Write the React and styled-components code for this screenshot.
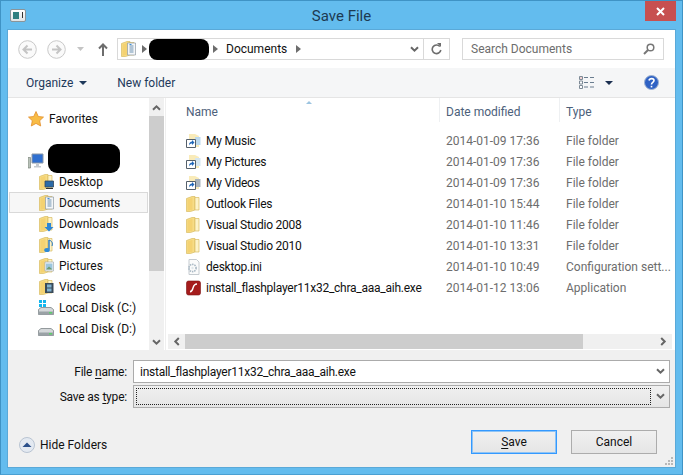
import styled, { createGlobalStyle } from "styled-components";

const GlobalStyle = createGlobalStyle`
    html, body {
        margin : 0;
        width : 683px;
        height : 475px;
        overflow : hidden;
        font-family : Roboto, "Liberation Sans", sans-serif;
        font-size : 12px;
        color : #111111;
    }
    * { box-sizing : border-box; }
    svg { display : block; flex : none; }
`

const Win = styled.div`
    width : 683px;
    height : 475px;
    display : flex;
    flex-direction : column;
    padding : 0 7px 7px 7px;
    background-color : #63bcee;
    border : 1px solid #3f93c5;
    border-bottom-color : #4aa0d2;
`

const TitleBar = styled.div`
    height : 29px;
    display : grid;
    grid-template-columns : 1fr auto 1fr;
    align-items : start;
`

const TitleIcon = styled.div`
    width : 16px;
    height : 13px;
    margin-top : 8px;
    margin-left : 2px;
    background : linear-gradient(#ffffff, #dfe3e6);
    border : 1px solid #8a9499;
    border-radius : 2px;
    padding : 2px;
    display : flex;
    &::before { content : ""; width : 6px; height : 7px; background : #2f7f80; }
    &::after { content : ""; width : 1px; height : 6px; background : #333; margin-left : 3px; }
`

const Title = styled.div`
    font-size : 15px;
    line-height : 31px;
    color : #1d3a52;
`

const CloseBtn = styled.div`
    justify-self : end;
    width : 31px;
    height : 20px;
    margin-right : -1px;
    background-color : #c75050;
    display : flex;
    justify-content : center;
    align-items : center;
`

const Client = styled.div`
    flex : 1;
    min-height : 0;
    display : flex;
    flex-direction : column;
    background-color : #f0f0f0;
    box-shadow : 0 0 0 1px #5aa9d8;
`

const NavBar = styled.div`
    height : 38px;
    flex : none;
    background-color : white;
    display : flex;
    align-items : center;
    padding-left : 10px;
`

const Hidden = styled.div`
    background-color : black;
    border-radius : ${(p) => p.$radius || 8}px;
    width : ${(p) => p.$w}px;
    height : ${(p) => p.$h}px;
    margin-left : ${(p) => p.$left || 0}px;
    margin-top : ${(p) => p.$top || 0}px;
    flex : none;
`

const Spacer = styled.span`
    width : ${(p) => p.$w}px;
    flex : none;
`

const Slot = styled.div`
    margin-left : ${(p) => p.$left}px;
    flex : none;
`

const AddressBox = styled.div`
    width : 333px;
    height : 22px;
    margin-left : 9px;
    display : flex;
    align-items : center;
    border : 1px solid #d9d9d9;
    padding-left : 3px;
`

const AddressText = styled.span`
    color : #111111;
    width : 61px;
    margin-left : 8px;
    white-space : nowrap;
`

const AddressEnd = styled.div`
    margin-left : auto;
    display : flex;
    align-items : center;
    height : 100%;
`

const RefreshCell = styled.div`
    width : 26px;
    height : 100%;
    margin-left : 4px;
    border-left : 1px solid #d9d9d9;
    display : flex;
    justify-content : center;
    align-items : center;
`

const SearchBox = styled.div`
    width : 202px;
    height : 22px;
    margin-left : 12px;
    border : 1px solid #d9d9d9;
    padding : 0 8px;
    display : flex;
    align-items : center;
    justify-content : space-between;
    color : #6d6d6d;
`

const ToolBar = styled.div`
    height : 30px;
    flex : none;
    background-color : #f5f6f7;
    border-bottom : 1px solid #e5e5e5;
    display : flex;
    align-items : center;
    color : #1e395b;
    padding-left : 18px;
`

const ToolLabel = styled.span`
    margin-left : ${(p) => p.$left || 0}px;
    margin-right : ${(p) => p.$gap || 0}px;
    white-space : nowrap;
`

const ToolRight = styled.div`
    margin-left : auto;
    display : flex;
    align-items : center;
    margin-right : 16px;
`

const Main = styled.div`
    height : 252px;
    flex : none;
    display : flex;
    background-color : white;
`

const Side = styled.div`
    width : 141px;
    flex : none;
    padding-top : 10px;
    overflow : hidden;
`

const SideRow = styled.div`
    height : 21px;
    margin-left : ${(p) => (p.$top ? 0 : 1)}px;
    width : ${(p) => (p.$top ? 141 : 139)}px;
    display : flex;
    align-items : center;
    gap : 5px;
    padding-left : ${(p) => (p.$top ? 19 : 29)}px;
    white-space : nowrap;
    color : #111111;
    border : 1px solid ${(p) => (p.$selected ? "#d9d9d9" : "transparent")};
    background-color : ${(p) => (p.$selected ? "#f7f7f7" : "transparent")};
`

const SideGap = styled.div`
    height : 21px;
`

const VScroll = styled.div`
    width : 15px;
    flex : none;
    display : flex;
    flex-direction : column;
    background-color : #f0f0f0;
`

const VArrow = styled.div`
    height : ${(p) => p.$h}px;
    flex : none;
    display : flex;
    justify-content : center;
    align-items : center;
`

const VThumb = styled.div`
    height : 155px;
    flex : none;
    background-color : #cdcdcd;
`

const VFill = styled.div`
    flex : 1;
`

const Splitter = styled.div`
    width : 4px;
    flex : none;
    background : linear-gradient(90deg, white 0 1px, #efefef 1px 2px, white 2px);
`

const Files = styled.div`
    flex : 1;
    min-width : 0;
    display : flex;
    flex-direction : column;
    position : relative;
`

const SortMark = styled.div`
    position : absolute;
    left : 138px;
    top : 3px;
    width : 0;
    height : 0;
    border : 3px solid transparent;
    border-top : 0;
    border-bottom : 3px solid #9cc4e0;
`

const Columns = styled.div`
    display : grid;
    grid-template-columns : 271px 120px 1fr;
    align-items : center;
    height : ${(p) => p.$h}px;
    flex : none;
`

const HeadCell = styled.div`
    height : 100%;
    display : flex;
    align-items : center;
    color : #4c607a;
    padding-left : ${(p) => p.$left}px;
    padding-top : 4px;
    border-left : ${(p) => (p.$line ? "1px solid #eef0f2" : "none")};
`

const FileList = styled.div`
    padding-top : 8px;
    flex : 1;
`

const NameCell = styled.div`
    display : flex;
    align-items : center;
    gap : 5px;
    padding-left : 18px;
    color : #111111;
    white-space : nowrap;
    letter-spacing : -0.25px;
`

const InfoCell = styled.div`
    padding-left : 7px;
    color : #6d6d6d;
    white-space : nowrap;
`

const HScroll = styled.div`
    height : 15px;
    margin-bottom : 1px;
    margin-right : 3px;
    flex : none;
    display : flex;
    align-items : stretch;
    background-color : #f0f0f0;
`

const HArrow = styled.div`
    width : 17px;
    flex : none;
    display : flex;
    align-items : center;
    justify-content : center;
`

const HThumb = styled.div`
    width : 398px;
    flex : none;
    background-color : #cdcdcd;
`

const HFill = styled.div`
    flex : 1;
`

const Bottom = styled.div`
    flex : 1;
    display : flex;
    flex-direction : column;
    padding-top : 10px;
    position : relative;
`

const FieldRow = styled.div`
    display : flex;
    align-items : center;
    height : 23px;
    margin-bottom : 2px;
`

const FieldLabel = styled.div`
    width : 119px;
    text-align : right;
    color : #111111;
    letter-spacing : -0.2px;
    u { text-underline-offset : 2px; }
`

const FileInput = styled.div`
    width : 537px;
    height : 100%;
    margin-left : 6px;
    border : 1px solid #ababab;
    background-color : ${(p) => (p.$select ? "transparent" : "white")};
    background-image : ${(p) => (p.$select ? "linear-gradient(#f0f0f0, #e5e5e5)" : "none")};
    display : flex;
    align-items : center;
    justify-content : space-between;
    padding : ${(p) => (p.$select ? "2px 4px 2px 2px" : "0 4px 0 6px")};
    white-space : nowrap;
    letter-spacing : -0.25px;
`

const FocusBox = styled.div`
    flex : none;
    width : 515px;
    height : 100%;
    border : 1px dotted #222;
`

const Footer = styled.div`
    margin-top : 20px;
    display : flex;
    align-items : flex-start;
    justify-content : space-between;
    padding : 0 18px 0 11px;
`

const HideBtn = styled.div`
    display : flex;
    align-items : center;
    gap : 5px;
    margin-top : 7px;
    color : #111111;
`

const ButtonRow = styled.div`
    display : flex;
    gap : 14px;
`

const DlgButton = styled.div`
    width : 86px;
    height : 24px;
    display : flex;
    justify-content : center;
    align-items : center;
    border : 1px solid ${(p) => (p.$primary ? "#3399ff" : "#acacac")};
    box-shadow : ${(p) => (p.$primary ? "inset 0 0 0 1px #8fc4f5" : "none")};
    background-image : linear-gradient(#f0f0f0, #e5e5e5);
    color : #111111;
    u { text-underline-offset : 2px; }
`

const Grip = styled.div`
    position : absolute;
    right : 2px;
    bottom : 2px;
    display : grid;
    grid-template-columns : repeat(3, 2px);
    grid-auto-rows : 2px;
    gap : 1px;
`

const GripDot = styled.span`
    background-color : ${(p) => (p.$off ? "transparent" : "#b8b8b8")};
`

const TurnSvg = styled.svg`
    transform : rotate(${(p) => p.$rot}deg);
`

const MirrorSvg = styled.svg`
    transform : ${(p) => (p.$flip ? "scaleX(-1)" : "none")};
`

const DiskSvg = styled.svg`
    margin-left : -1px;
`

const Arrow = ({ color = "#6d6d6d" }) => (
    <svg width="5" height="8" viewBox="0 0 5 8"><path d="M0 0l5 4-5 4z" fill={color} /></svg>
)

const Caret = ({ color = "#1e395b" }) => (
    <svg width="8" height="4" viewBox="0 0 8 4"><path d="M0 0h8L4 4z" fill={color} /></svg>
)

const chevronTurn = { down: 0, up: 180, left: 90, right: -90 };

const Chevron = ({ dir = "down", color = "#666" }) => (
    <TurnSvg $rot={chevronTurn[dir]} width="9" height="7" viewBox="0 0 9 7">
        <path d="M1 1.2l3.5 3.5L8 1.2" fill="none" stroke={color} strokeWidth="2" />
    </TurnSvg>
)

const NavCircle = ({ flip }) => (
    <MirrorSvg $flip={flip} width="19" height="19" viewBox="0 0 19 19">
        <circle cx="9.5" cy="9.5" r="8.8" fill="#fafafa" stroke="#c9c9c9" />
        <path d="M14 9.5H6M9.5 5.5l-4 4 4 4" fill="none" stroke="#c4c4c4" strokeWidth="2" />
    </MirrorSvg>
)

const FolderBase = () => (
    <>
        <path d="M.5 2.5L6 .5h3V14l-4.500 1.500H.5z" fill="#f7dc86" stroke="#d8bb62" strokeWidth=".7" />
        <path d="M9 1.500h4V14H9z" fill="#fdf3c8" stroke="#d8bb62" strokeWidth=".7" />
        <path d="M1.500 3.500L6.500 1.800v12L1.500 14.800z" fill="#f4d272" />
    </>
)

const Folder = ({ children }) => (
    <svg width="15" height="16" viewBox="0 0 15 16">
        <FolderBase />
        {children}
    </svg>
)

const DocLines = () => (
    <g>
        <path d="M6.500 2h8v12h-8z" fill="#f4f6f8" stroke="#8e9aa4" strokeWidth=".7" />
        <path d="M8.500 5h4M8.500 7h4M8.500 9h4M8.500 11h4" stroke="#6f93b2" />
        <path d="M8.500 3h2v1h-2z" fill="#3d8fd8" />
    </g>
)

const overlays = {
    desktop: <><path d="M6 7h8.500v6H6z" fill="#2a6aa8" stroke="#33475a" strokeWidth=".8" /><path d="M7 14.500h7" stroke="#333" /></>,
    documents: <DocLines />,
    downloads: <path d="M8 7h4v4h2.500L10 15.500 5.500 11H8z" fill="#2d86d6" />,
    music: <><path d="M10 3v9.500" stroke="#2276c4" strokeWidth="1.400" /><ellipse cx="8" cy="13" rx="2.800" ry="2" fill="#2f8ad6" /><path d="M10 3c3 1 4 3 3 6" fill="none" stroke="#2276c4" /></>,
    pictures: <><path d="M6 4h8.500v9H6z" fill="#f8f8f8" stroke="#a2adb5" strokeWidth=".7" /><path d="M7 5.500h6.500v6H7z" fill="#9cc6de" /><path d="M7 11.500l3-3 3.500 3z" fill="#6f9a70" /></>,
    videos: <><path d="M6 4h8.500v10H6z" fill="#3a4a58" /><path d="M8 5.500h4.500v3H8zM8 9.500h4.500v3H8z" fill="#7fb2d0" /></>,
}

const Disk = ({ system }) => (
    <DiskSvg width="16" height="16" viewBox="0 0 16 16">
        {system && <path d="M1 0h3v3H1zM5 0h3v3H5zM1 4h3v3H1zM5 4h3v3H5z" fill="#12b6ee" />}
        <path d="M.5 9.500L3 7.500h10l2.500 2v5H.5z" fill="#d4d8da" stroke="#7e8589" strokeWidth=".8" />
        <path d="M.5 11.500h15v3H.5z" fill="#9aa2a6" />
        <path d="M11 12h3v1.500h-3z" fill="#5bd16a" />
    </DiskSvg>
)

const Computer = () => (
    <svg width="16" height="16" viewBox="0 0 16 16">
        <path d="M0 4.500h2.500V15H0z" fill="#b9c2b9" stroke="#6d766d" strokeWidth=".6" />
        <path d="M4 1h11v9H4z" fill="#2f6fd0" stroke="#8a97a6" />
        <path d="M8 11h3v2h2v1.500H6V13h2z" fill="#c4c9cf" />
    </svg>
)

const Star = () => (
    <svg width="16" height="16" viewBox="0 0 16 16">
        <path d="M8 .5l2.300 5 5.200.600-3.800 3.600 1 5.300L8 12.400 3.300 15l1-5.300L.5 6.100l5.200-.600z" fill="#f8bc45" stroke="#e28e2c" strokeWidth=".8" />
    </svg>
)

const Shortcut = ({ color }) => (
    <svg width="15" height="16" viewBox="0 0 15 16">
        <path d="M3 1h6l4 2v11H3z" fill="#f7e6a8" opacity=".8" />
        <path d="M9 4h5.500v8H9z" fill={color} />
        <path d="M.5 6.500h9v8h-9z" fill="white" stroke="#55606a" />
        <path d="M3 12.500c0-3 1.500-4 3-4V7l2.500 2.500L6 12v-1.500c-1.200 0-2.300.6-3 2z" fill="#1f66b8" />
    </svg>
)

const IniFile = () => (
    <svg width="15" height="16" viewBox="0 0 15 16">
        <path d="M3 .5h7.500L13 3v12.500H3z" fill="#fbfbfb" stroke="#c5cbd0" />
        <circle cx="6.500" cy="9" r="3.600" fill="none" stroke="#a9b8c4" strokeWidth="1.600" strokeDasharray="1.500 .8" />
        <circle cx="6.500" cy="9" r="1.200" fill="#dfe6eb" />
    </svg>
)

const FlashFile = () => (
    <svg width="15" height="16" viewBox="0 0 15 16">
        <rect x=".5" y="1" width="14" height="14" rx="2" fill="#a51c1c" stroke="#7c1111" strokeWidth=".6" />
        <path d="M11 4c-3 0-3.500 2-4 4s-1.200 3.500-3 3.800" fill="none" stroke="white" strokeWidth="1.400" />
    </svg>
)

const sideItems = [
    { label: "Desktop", kind: "desktop" },
    { label: "Documents", kind: "documents", selected: true },
    { label: "Downloads", kind: "downloads" },
    { label: "Music", kind: "music" },
    { label: "Pictures", kind: "pictures" },
    { label: "Videos", kind: "videos" },
]

const fileItems = [
    { name: "My Music", date: "2014-01-09 17:36", type: "File folder", icon: <Shortcut color="#bcd9ee" /> },
    { name: "My Pictures", date: "2014-01-09 17:36", type: "File folder", icon: <Shortcut color="#d5e6f0" /> },
    { name: "My Videos", date: "2014-01-09 17:36", type: "File folder", icon: <Shortcut color="#a9b4bd" /> },
    { name: "Outlook Files", date: "2014-01-10 15:44", type: "File folder", icon: <Folder /> },
    { name: "Visual Studio 2008", date: "2014-01-10 11:46", type: "File folder", icon: <Folder /> },
    { name: "Visual Studio 2010", date: "2014-01-10 13:31", type: "File folder", icon: <Folder /> },
    { name: "desktop.ini", date: "2014-01-10 10:49", type: "Configuration sett...", icon: <IniFile /> },
    { name: "install_flashplayer11x32_chra_aaa_aih.exe", date: "2014-01-12 13:06", type: "Application", icon: <FlashFile /> },
]

const App = () => {
    return (
        <>
        <GlobalStyle />
        <Win>
            <TitleBar>
                <TitleIcon />
                <Title>Save File</Title>
                <CloseBtn>
                    <svg width="9" height="9" viewBox="0 0 9 9"><path d="M1 1l7 7M8 1L1 8" stroke="white" strokeWidth="2" /></svg>
                </CloseBtn>
            </TitleBar>
            <Client>
                <NavBar>
                    <NavCircle />
                    <Spacer $w={10} />
                    <NavCircle flip />
                    <Slot $left={11}>
                        <svg width="7" height="4" viewBox="0 0 7 4"><path d="M0 0h7L3.500 4z" fill="#c4c4c4" /></svg>
                    </Slot>
                    <Slot $left={14}>
                        <svg width="10" height="13" viewBox="0 0 10 13"><path d="M5 13V2M1 5.500L5 1.500l4 4" fill="none" stroke="#6d6d6d" strokeWidth="2" /></svg>
                    </Slot>
                    <AddressBox>
                        <Folder>{overlays.documents}</Folder>
                        <Spacer $w={6} />
                        <Arrow />
                        <Spacer $w={2} />
                        <Hidden $w={60} $h={21} />
                        <Spacer $w={4} />
                        <Arrow />
                        <AddressText>Documents</AddressText>
                        <Spacer $w={9} />
                        <Arrow />
                        <AddressEnd>
                            <Chevron />
                            <RefreshCell>
                                <svg width="11" height="12" viewBox="0 0 11 12"><path d="M8.800 3.500A4.300 4.300 0 1 0 9.800 7" fill="none" stroke="#6d6d6d" strokeWidth="1.600" /><path d="M6 0l4 0v4z" fill="#6d6d6d" /></svg>
                            </RefreshCell>
                        </AddressEnd>
                    </AddressBox>
                    <SearchBox>
                        Search Documents
                        <svg width="12" height="12" viewBox="0 0 12 12"><circle cx="7.500" cy="4.500" r="3.300" fill="none" stroke="#777" strokeWidth="1.500" /><path d="M5 7l-4 4" stroke="#777" strokeWidth="2" /></svg>
                    </SearchBox>
                </NavBar>
                <ToolBar>
                    <ToolLabel $gap={6}>Organize</ToolLabel>
                    <Caret />
                    <ToolLabel $left={30}>New folder</ToolLabel>
                    <ToolRight>
                        <svg width="15" height="13" viewBox="0 0 15 13">
                            <path d="M.5.500h3v3h-3zM.5 5h3v3h-3zM.5 9.500h3v3h-3z" fill="white" stroke="#7d8a96" />
                            <path d="M5 1.500h4M11 1.500h4M5 6.500h4M11 6.500h4M5 11h4M11 11h4" stroke="#6a7d8f" />
                            <path d="M1.500 1.500h1v1h-1z" fill="#c04040" />
                        </svg>
                        <Spacer $w={11} />
                        <Caret color="#1b2f50" />
                        <Slot $left={31}>
                            <svg width="15" height="15" viewBox="0 0 15 15">
                                <circle cx="7.500" cy="7.500" r="7" fill="#2f62c4" stroke="#9eb2d0" />
                                <path d="M5 5.500c.5-2.500 5-2.500 5 0 0 2-2.500 1.800-2.500 4" fill="none" stroke="white" strokeWidth="1.600" />
                                <path d="M6.700 10.800h1.600v1.600H6.700z" fill="white" />
                            </svg>
                        </Slot>
                    </ToolRight>
                </ToolBar>
                <Main>
                    <Side>
                        <SideRow $top><Star />Favorites</SideRow>
                        <SideGap />
                        <SideRow $top>
                            <Computer />
                            <Hidden $w={72} $h={29} $left={-1} $top={-4} $radius={9} />
                        </SideRow>
                        {sideItems.map((el) => (
                            <SideRow key={el.label} $selected={el.selected}><Folder>{overlays[el.kind]}</Folder>{el.label}</SideRow>
                        ))}
                        <SideRow><Disk system />Local Disk (C:)</SideRow>
                        <SideRow><Disk />Local Disk (D:)</SideRow>
                    </Side>
                    <VScroll>
                        <VArrow $h={18}><Chevron dir="up" /></VArrow>
                        <VThumb />
                        <VFill />
                        <VArrow $h={16}><Chevron /></VArrow>
                    </VScroll>
                    <Splitter />
                    <Files>
                        <SortMark />
                        <Columns $h={24}>
                            <HeadCell $left={18}>Name</HeadCell>
                            <HeadCell $left={6} $line>Date modified</HeadCell>
                            <HeadCell $left={6} $line>Type</HeadCell>
                        </Columns>
                        <FileList>
                            {fileItems.map((el) => (
                                <Columns $h={21} key={el.name}>
                                    <NameCell>{el.icon}{el.name}</NameCell>
                                    <InfoCell>{el.date}</InfoCell>
                                    <InfoCell>{el.type}</InfoCell>
                                </Columns>
                            ))}
                        </FileList>
                        <HScroll>
                            <HArrow><Chevron dir="left" /></HArrow>
                            <HThumb />
                            <HFill />
                            <HArrow><Chevron dir="right" /></HArrow>
                        </HScroll>
                    </Files>
                </Main>
                <Bottom>
                    <FieldRow>
                        <FieldLabel>File <u>n</u>ame:</FieldLabel>
                        <FileInput>
                            install_flashplayer11x32_chra_aaa_aih.exe
                            <Chevron />
                        </FileInput>
                    </FieldRow>
                    <FieldRow>
                        <FieldLabel>Save as <u>t</u>ype:</FieldLabel>
                        <FileInput $select>
                            <FocusBox />
                            <Chevron />
                        </FileInput>
                    </FieldRow>
                    <Footer>
                        <HideBtn>
                            <svg width="16" height="16" viewBox="0 0 16 16">
                                <circle cx="8" cy="8" r="7.500" fill="#e3e9f1" stroke="#b9c4d2" />
                                <path d="M3.500 10L8 5.500l4.500 4.500z" fill="#2a4f8a" />
                            </svg>
                            Hide Folders
                        </HideBtn>
                        <ButtonRow>
                            <DlgButton $primary><span><u>S</u>ave</span></DlgButton>
                            <DlgButton>Cancel</DlgButton>
                        </ButtonRow>
                    </Footer>
                    <Grip>
                        <GripDot $off /><GripDot $off /><GripDot />
                        <GripDot $off /><GripDot /><GripDot />
                        <GripDot /><GripDot /><GripDot />
                    </Grip>
                </Bottom>
            </Client>
        </Win>
        </>
    )
}

export default App;
